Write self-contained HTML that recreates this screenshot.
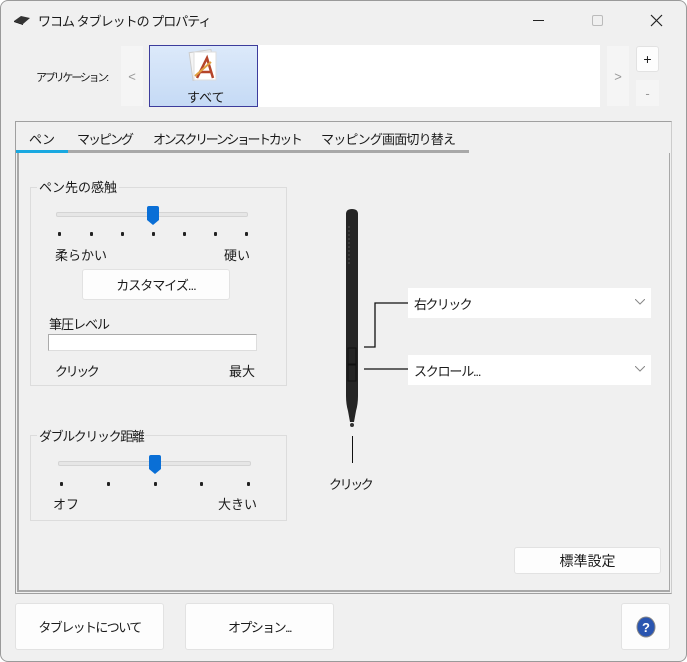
<!DOCTYPE html>
<html><head><meta charset="utf-8"><style>
*{margin:0;padding:0;box-sizing:border-box}
body{width:687px;height:662px;background:#fff;font-family:"Liberation Sans","Noto Sans CJK JP",sans-serif;font-size:13px;color:#1a1a1a;position:relative;overflow:hidden}
.win{position:absolute;left:0;top:0;width:687px;height:662px;background:#f0f0f0;border:1px solid #9a9a9a;border-radius:8px}
.a{position:absolute;white-space:nowrap}
.k{letter-spacing:-1.6px}
.btn{position:absolute;background:#fdfdfd;border:1px solid #e2e2e2;border-radius:3px;display:flex;align-items:center;justify-content:center}
.grp{position:absolute;border:1px solid #dcdcdc}
.tick{position:absolute;width:3px;height:4px;background:#222;border-radius:1px}
.track{position:absolute;height:5px;background:#e6e6e6;border:1px solid #d4d4d4;border-radius:2px}
.thumb{position:absolute;width:12px;height:19px}
.dd{position:absolute;background:#fff;height:30px;display:flex;align-items:center;padding-left:6px;font-size:13px}
.dd svg{position:absolute;right:6px;top:11px}
</style></head><body><div class="win">
<svg class="a" style="left:12px;top:13px" width="18" height="12"><path d="M1 7 L8 2 L17 4 L10 10 Z" fill="#333"/><path d="M1 7 L10 10 L10 11 L1 8Z" fill="#111"/></svg>
<div class="a k" style="left:37px;top:10px;letter-spacing:-1px">ワコム タブレットの プロパティ</div>
<div class="a" style="left:532px;top:19px;width:11px;height:1px;background:#222"></div>
<div class="a" style="left:591px;top:14px;width:11px;height:11px;border:1px solid #bbb;border-radius:2px"></div>
<svg class="a" style="left:649px;top:13px" width="13" height="13"><path d="M1 1L12 12M12 1L1 12" stroke="#222" stroke-width="1.2"/></svg>

<div class="a" style="left:35px;top:68px;font-size:11px;letter-spacing:-2.2px">アプリケーション:</div>
<div class="a" style="left:120px;top:45px;width:22px;height:60px;background:#f5f5f5;color:#999;display:flex;align-items:center;justify-content:center">&lt;</div>
<div class="a" style="left:148px;top:44px;width:451px;height:62px;background:#fff"></div>
<div class="a" style="left:148px;top:44px;width:109px;height:62px;background:linear-gradient(#dce9fa,#c5daf5);border:1px solid #3c3c9c"></div>
<svg class="a" style="left:186px;top:47px" width="36" height="36"><rect x="4" y="3" width="22" height="28" fill="#f4f4f4" stroke="#ccc" transform="rotate(-8 15 17)"/><rect x="7" y="4" width="22" height="28" fill="#fff" stroke="#ddd"/><path d="M10 30L20 10L26 30M13 24H24" stroke="#b5452a" stroke-width="2.5" fill="none"/><path d="M8 28L24 14" stroke="#e0a040" stroke-width="2"/></svg>
<div class="a" style="left:186px;top:86px">すべて</div>
<div class="a" style="left:606px;top:45px;width:22px;height:60px;background:#f5f5f5;color:#999;display:flex;align-items:center;justify-content:center">&gt;</div>
<div class="btn" style="left:635px;top:45px;width:23px;height:26px;font-size:14px">+</div>
<div class="a" style="left:635px;top:79px;width:23px;height:26px;background:#f5f5f5;color:#999;display:flex;align-items:center;justify-content:center">-</div>

<div class="a" style="left:14px;top:120px;width:657px;height:473px;border:1px solid #a0a0a0;border-right-color:#ccc"></div>
<div class="a" style="left:15px;top:149px;width:453px;height:3px;background:#a8a8a8"></div>
<div class="a" style="left:15px;top:149px;width:52px;height:3px;background:#19a8e0"></div>
<div class="a" style="left:28px;top:128px">ペン</div>
<div class="a k" style="left:76px;top:128px;letter-spacing:-2px">マッピング</div>
<div class="a k" style="left:152px;top:128px;letter-spacing:-2.4px">オンスクリーンショートカット</div>
<div class="a" style="left:320px;top:128px;letter-spacing:-0.8px">マッピング画面切り替え</div>
<div class="a" style="left:16px;top:152px;width:653px;height:439px;border:2px solid #a8a8a8;border-top:none;border-right-width:1px"></div>

<div class="grp" style="left:29px;top:186px;width:257px;height:199px"></div>
<div class="a" style="left:36px;top:176px;background:#f0f0f0;padding:0 2px">ペン先の感触</div>
<div class="track" style="left:55px;top:211px;width:192px"></div>
<svg class="thumb" style="left:146px;top:205px" width="12" height="19"><path d="M0 2Q0 0 2 0H10Q12 0 12 2V14L6 19L0 14Z" fill="#0a6fd6"/></svg>
<div class="tick" style="left:57px;top:231px"></div><div class="tick" style="left:89px;top:231px"></div><div class="tick" style="left:120px;top:231px"></div><div class="tick" style="left:151px;top:231px"></div><div class="tick" style="left:182px;top:231px"></div><div class="tick" style="left:213px;top:231px"></div><div class="tick" style="left:244px;top:231px"></div>
<div class="a" style="left:54px;top:244px">柔らかい</div>
<div class="a" style="left:223px;top:244px">硬い</div>
<div class="btn" style="left:81px;top:268px;width:148px;height:31px;letter-spacing:-1px">カスタマイズ...</div>
<div class="a" style="left:48px;top:313px;letter-spacing:-1px">筆圧レベル</div>
<div class="a" style="left:47px;top:333px;width:209px;height:17px;background:#fff;border:1px solid #aaa;border-right-color:#ddd;border-bottom-color:#ddd"></div>
<div class="a" style="left:54px;top:360px;letter-spacing:-2.4px">クリック</div>
<div class="a" style="left:228px;top:360px">最大</div>

<div class="grp" style="left:29px;top:434px;width:257px;height:86px"></div>
<div class="a" style="left:36px;top:425px;background:#f0f0f0;padding:0 2px;letter-spacing:-1.4px">ダブルクリック距離</div>
<div class="track" style="left:57px;top:460px;width:193px"></div>
<svg class="thumb" style="left:148px;top:454px" width="12" height="19"><path d="M0 2Q0 0 2 0H10Q12 0 12 2V14L6 19L0 14Z" fill="#0a6fd6"/></svg>
<div class="tick" style="left:59px;top:481px"></div><div class="tick" style="left:106px;top:481px"></div><div class="tick" style="left:153px;top:481px"></div><div class="tick" style="left:199px;top:481px"></div><div class="tick" style="left:246px;top:481px"></div>
<div class="a" style="left:52px;top:493px">オフ</div>
<div class="a" style="left:217px;top:493px">大きい</div>

<svg class="a" style="left:338px;top:205px" width="30" height="230"><path d="M7 8Q7 3 13 3Q19 3 19 8L19 190Q19 198 17 205L15 216L11 216L9 205Q7 198 7 190Z" fill="#252525"/><path d="M10 20V60" stroke="#3a3a3a" stroke-width="2" stroke-dasharray="2 2"/><rect x="9" y="142" width="8" height="16" fill="none" stroke="#111"/><rect x="9" y="159" width="8" height="16" fill="none" stroke="#111"/><circle cx="13" cy="219" r="2" fill="#333"/></svg>
<div class="a" style="left:351px;top:435px;width:1px;height:27px;background:#111"></div>
<div class="a" style="left:328px;top:473px;letter-spacing:-2.4px">クリック</div>
<svg class="a" style="left:360px;top:300px" width="48" height="80"><path d="M3 46H14V2H48M3 68H48" stroke="#111" stroke-width="1.3" fill="none"/></svg>
<div class="dd" style="left:407px;top:287px;width:243px;letter-spacing:-1.6px">右クリック<svg width="10" height="6"><path d="M0 0L5 5L10 0" stroke="#888" fill="none"/></svg></div>
<div class="dd" style="left:407px;top:354px;width:243px;letter-spacing:-1.2px">スクロール...<svg width="10" height="6"><path d="M0 0L5 5L10 0" stroke="#888" fill="none"/></svg></div>

<div class="btn" style="left:513px;top:546px;width:147px;height:27px;font-size:14px">標準設定</div>
<div class="btn" style="left:14px;top:602px;width:149px;height:47px;letter-spacing:-1.6px">タブレットについて</div>
<div class="btn" style="left:184px;top:602px;width:149px;height:47px;letter-spacing:-1.6px">オプション...</div>
<div class="btn" style="left:620px;top:602px;width:49px;height:47px"><svg width="20" height="22"><ellipse cx="10" cy="11" rx="9" ry="10" fill="#2a55b0" stroke="#888"/><text x="10" y="16" text-anchor="middle" font-size="13" font-weight="bold" fill="#fff" font-family="Liberation Sans">?</text></svg></div>
</div></body></html>
